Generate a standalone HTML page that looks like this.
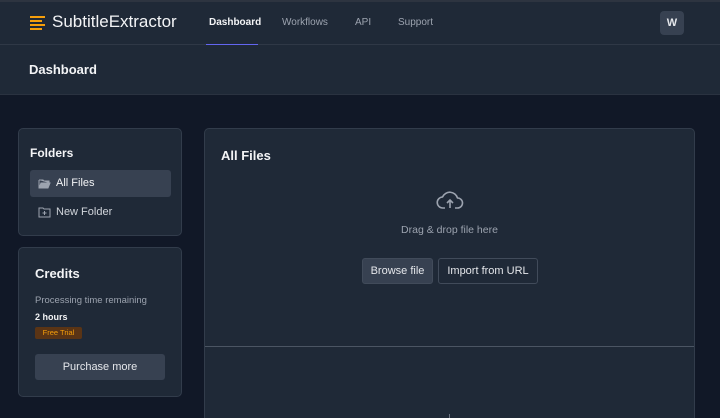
<!DOCTYPE html>
<html><head><style>
*{box-sizing:border-box;margin:0;padding:0}
html,body{width:720px;height:418px;overflow:hidden}
body{background:#111827;font-family:"Liberation Sans",sans-serif;color:#f3f4f6;position:relative}
.nav{position:absolute;left:0;top:0;width:720px;height:45px;background:#1f2937;border-top:2px solid #2d3440;border-bottom:1px solid #2f3846}
.sub{position:absolute;left:0;top:45px;width:720px;height:50px;background:#1f2937;border-bottom:1px solid #2a3240}
.abs{position:absolute}
.card{position:absolute;background:#1f2937;border:1px solid #323c4b;border-radius:5px}
</style></head><body>
<div class="nav">
 <svg class="abs" style="left:30px;top:13px" width="16" height="16"><g stroke="#f59e0b" stroke-width="2"><line x1="0" y1="2" x2="15" y2="2"/><line x1="0" y1="6" x2="12" y2="6"/><line x1="0" y1="10" x2="15" y2="10"/><line x1="0" y1="14" x2="12" y2="14"/></g></svg>
 <div class="abs" style="left:52px;top:10px;font-size:17px;color:#f3f4f6">SubtitleExtractor</div>
 <div class="abs" style="left:209px;top:15px;font-size:10px;font-weight:bold;color:#f3f4f6">Dashboard</div>
 <div class="abs" style="left:206px;top:42px;width:52px;height:2px;background:#6366f1"></div>
 <div class="abs" style="left:282px;top:15px;font-size:10px;color:#9ca3af">Workflows</div>
 <div class="abs" style="left:355px;top:15px;font-size:10px;color:#9ca3af">API</div>
 <div class="abs" style="left:398px;top:15px;font-size:10px;color:#9ca3af">Support</div>
 <div class="abs" style="left:660px;top:9px;width:24px;height:24px;border-radius:4px;background:#374151;text-align:center;line-height:24px;font-size:11px;font-weight:bold;color:#e5e7eb">W</div>
</div>
<div class="sub"><div class="abs" style="left:29px;top:17px;font-size:13px;font-weight:bold">Dashboard</div></div>

<div class="card" style="left:18px;top:128px;width:164px;height:108px">
 <div class="abs" style="left:11px;top:17px;font-size:12px;font-weight:bold">Folders</div>
 <div class="abs" style="left:11px;top:41px;width:141px;height:27px;background:#374151;border-radius:3px"></div>
 <svg class="abs" style="left:19px;top:49px" width="13" height="11"><path d="M1 2h4l1 1h5v2M1 2v8h9l2-5H3l-2 5" fill="#9ca3af" stroke="#9ca3af" stroke-width="1"/></svg>
 <div class="abs" style="left:37px;top:48px;font-size:11px;color:#f3f4f6">All Files</div>
 <svg class="abs" style="left:19px;top:77px" width="13" height="12"><path d="M1 2h4l1 1h6v8H1z" fill="none" stroke="#9ca3af"/><path d="M6.5 5v4M4.5 7h4" stroke="#9ca3af"/></svg>
 <div class="abs" style="left:37px;top:77px;font-size:11px;color:#d1d5db">New Folder</div>
</div>

<div class="card" style="left:18px;top:247px;width:164px;height:150px">
 <div class="abs" style="left:16px;top:18px;font-size:13px;font-weight:bold">Credits</div>
 <div class="abs" style="left:16px;top:47px;font-size:9.5px;color:#9ca3af">Processing time remaining</div>
 <div class="abs" style="left:16px;top:64px;font-size:9px;font-weight:bold">2 hours</div>
 <div class="abs" style="left:16px;top:79px;width:47px;height:12px;background:#5a3415;border-radius:2px;font-size:7.5px;color:#f59e0b;text-align:center;line-height:12px">Free Trial</div>
 <div class="abs" style="left:16px;top:106px;width:130px;height:26px;background:#374151;border-radius:3px;font-size:11px;color:#e5e7eb;text-align:center;line-height:26px">Purchase more</div>
</div>

<div class="card" style="left:204px;top:128px;width:491px;height:290px;border-bottom:none;border-radius:5px 5px 0 0">
 <div class="abs" style="left:16px;top:19px;font-size:13px;font-weight:bold">All Files</div>
 <svg class="abs" style="left:231px;top:60px" width="28" height="22" viewBox="0 0 28 22"><path d="M9 19H7a5.5 5.5 0 0 1-0.5-11 8 8 0 0 1 15 1 5 5 0 0 1 0 10h-2.5" fill="none" stroke="#9ca3af" stroke-width="1.6" stroke-linejoin="round"/><path d="M14 19v-8M11 14l3-3 3 3" fill="none" stroke="#9ca3af" stroke-width="1.6"/></svg>
 <div class="abs" style="left:0;width:489px;top:95px;text-align:center;font-size:10.5px;color:#9ca3af">Drag &amp; drop file here</div>
 <div class="abs" style="left:157px;top:129px;width:71px;height:26px;background:#374151;border:1px solid #414b5a;border-radius:3px;font-size:11px;color:#e5e7eb;text-align:center;line-height:24px">Browse file</div>
 <div class="abs" style="left:233px;top:129px;width:100px;height:26px;border:1px solid #414b5a;border-radius:3px;font-size:11px;color:#e5e7eb;text-align:center;line-height:24px">Import from URL</div>
 <div class="abs" style="left:0;top:217px;width:489px;height:1px;background:#4b5563"></div>
 <div class="abs" style="left:244px;top:285px;width:1px;height:6px;background:#6b7280"></div>
</div>
</body></html>
